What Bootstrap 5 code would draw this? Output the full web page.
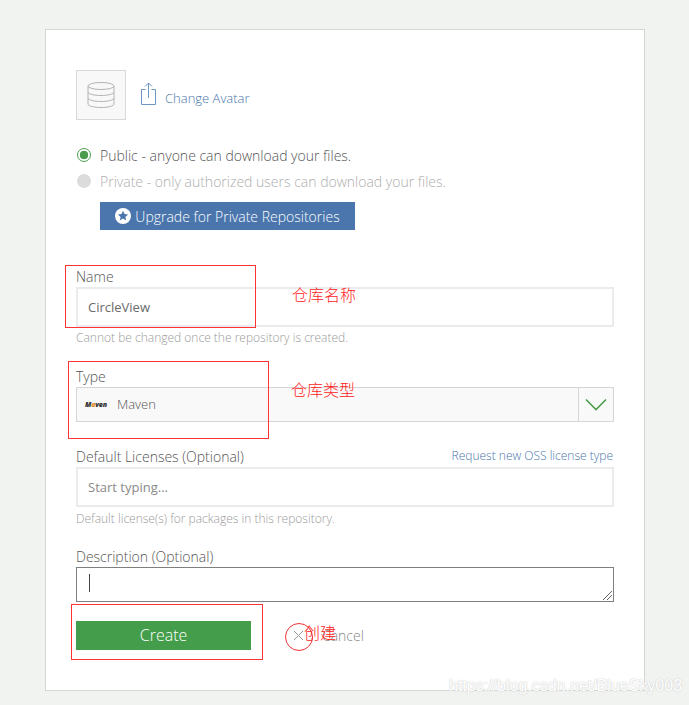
<!DOCTYPE html>
<html lang="zh">
<head>
<meta charset="utf-8">
<title>New repository</title>
<link rel="stylesheet" href="https://cdn.jsdelivr.net/npm/bootstrap@5.3.0/dist/css/bootstrap.min.css">
<style>
html,body{height:705px;overflow:hidden}
body{background:#f1f3f1;font-family:"Open Sans","Noto Sans CJK SC",sans-serif;font-weight:300;color:#555;padding:29px 44px 0 45px}
.panel-box{position:relative;background:#fff;border:1px solid #d4d6d4;height:662px;padding:40px 30px 0 30px}
.avatar-box{width:50px;height:50px;background:#f8f8f8;border:1px solid #d8d8d8}
.avatar-row{height:50px}
.link-blue{color:#4a76ad;text-decoration:none}
.avatar-link{font-size:13px;margin-left:9px;margin-top:8px}
.upload-ico{margin-left:15px;margin-top:-4px}
.radio-row{height:26px;font-size:14px;margin:0}
.radio-list{margin-top:22px}
.radio-dot{width:14px;height:14px;border-radius:50%;margin-left:1px;margin-right:9px;flex:none}
.radio-on{border:1px solid #4a9d4c;background:radial-gradient(circle,#4a9d4c 0 4px,#fff 4.6px)}
.radio-off{background:#dcdcdc}
.muted-line{color:#aeaeae}
.upgrade-btn{background:#4a76ad;color:#fff;width:255px;height:28px;margin:8px 0 0 24px;font-size:14px;font-weight:300;border:0;border-radius:0;padding:0}
.upgrade-btn:hover{background:#4a76ad;color:#fff}
.field-label{font-size:14px;line-height:20px;margin:0;color:#555;display:block}
.field-name{margin-top:37px}
.text-box{height:40px;border:2px solid #e9ebed;border-radius:0;font-size:13px;font-weight:400;color:#6a6a6a;padding:0 10px;box-shadow:none}
.text-box::placeholder{color:#8a8a8a;opacity:1}
.hint-line{font-size:12px;line-height:16px;color:#9a9a9a;margin:3px 0 0}
.select-box{height:35px;border:1px solid #d6d6d6;background:#f9f9f9;font-size:13px}
.select-arrow{width:35px;border-left:1px solid #d6d6d6;height:100%}
.maven-mark{margin-left:8px;width:25px;font-size:7px;line-height:8px;font-weight:800;font-style:italic;color:#333;letter-spacing:-.2px;white-space:nowrap}
.maven-a{color:#e08a2c}
.maven-name{margin-left:7px;font-weight:300;padding-top:1px}
.req-link{font-size:12px;font-weight:300;color:#4a76ad;margin-bottom:2px;margin-right:1px}
.note-box{height:35px;border:1px solid #7f7f7f;border-radius:0;padding:0;box-shadow:none;position:relative}
.caret-line{width:1px;height:18px;background:#444;margin:6px 0 0 12px}
.resize-ico{position:absolute;right:1px;bottom:1px}
.create-btn{background:#449d4a;color:#fff;width:175px;height:29px;border:0;border-radius:0;font-size:16px;font-weight:300;padding:0 0 2px}
.create-btn:hover{background:#449d4a;color:#fff}
.cancel-link{font-size:14px;color:#888;text-decoration:none;margin-left:19px}
.cancel-x{margin-left:43px}
.mark-frame{position:absolute;border:1px solid #f33;pointer-events:none}
.mark-note{position:absolute;color:#f22;font-size:16px;line-height:20px;font-weight:300;font-family:"Noto Sans CJK SC",sans-serif;white-space:nowrap}
.mark-ring{position:absolute;width:28px;height:28px;border:1px solid #e33;border-radius:50%}
.water-mark{position:absolute;left:449px;top:676px;font-family:"Liberation Sans",sans-serif;font-size:16px;line-height:20px;color:#fff;font-weight:400;text-shadow:0 0 1px #ccc,0 0 2px #d6d6d6;white-space:nowrap}
</style>
</head>
<body>
<div class="panel-box">
  <div class="d-flex align-items-center avatar-row">
    <div class="avatar-box d-flex align-items-center justify-content-center">
      <svg width="30" height="28" viewBox="0 0 30 28" fill="none" stroke="#b4b4b4" stroke-width="1"><ellipse cx="15" cy="5" rx="13" ry="3.5"/><path d="M2 5v18c0 2 6 3.500 13 3.500s13-1.500 13-3.500V5"/><path d="M2 11c0 2 6 3.500 13 3.500S28 13 28 11M2 17c0 2 6 3.500 13 3.500S28 19 28 17"/></svg>
    </div>
    <svg class="upload-ico" width="15" height="23" viewBox="0 0 15 23" fill="none" stroke="#6f95c2" stroke-width="1"><path d="M4.500 7.500H.5v15h14v-15h-4M7.500 16V1M4 4.500 7.500 1 11 4.500"/></svg>
    <a href="#" class="link-blue avatar-link">Change Avatar</a>
  </div>

  <div class="radio-list">
    <div class="radio-row d-flex align-items-center"><span class="radio-dot radio-on"></span>Public - anyone can download your files.</div>
    <div class="radio-row d-flex align-items-center muted-line"><span class="radio-dot radio-off"></span>Private - only authorized users can download your files.</div>
    <button type="button" class="btn upgrade-btn d-flex align-items-center justify-content-center gap-1">
      <svg width="16" height="16" viewBox="0 0 16 16"><circle cx="8" cy="8" r="8" fill="#fff"/><path fill="#4a76ad" d="m8 2.800 1.500 3.300 3.600.4-2.700 2.400.8 3.500L8 10.600l-3.200 1.800.8-3.500L2.900 6.500l3.600-.4z"/></svg>
      Upgrade for Private Repositories
    </button>
  </div>

  <label class="field-label field-name">Name</label>
  <input class="form-control text-box" value="CircleView">
  <p class="hint-line">Cannot be changed once the repository is created.</p>

  <label class="field-label" style="margin-top:21px">Type</label>
  <div class="select-box d-flex align-items-center justify-content-between">
    <div class="d-flex align-items-center">
      <span class="maven-mark">M<span class="maven-a">a</span>ven</span>
      <span class="maven-name">Maven</span>
    </div>
    <div class="select-arrow d-flex align-items-center justify-content-center">
      <svg width="22" height="13" viewBox="0 0 22 13" fill="none" stroke="#4a9d4c" stroke-width="1.600"><path d="M1 1.500 11 11.500 21 1.500"/></svg>
    </div>
  </div>

  <div class="d-flex justify-content-between align-items-end" style="margin-top:25px">
    <label class="field-label">Default Licenses (Optional)</label>
    <a href="#" class="req-link" style="text-decoration:none">Request new OSS license type</a>
  </div>
  <input class="form-control text-box" placeholder="Start typing...">
  <p class="hint-line" style="margin-top:4px">Default license(s) for packages in this repository.</p>

  <label class="field-label" style="margin-top:20px">Description (Optional)</label>
  <div class="note-box">
    <div class="caret-line"></div>
    <svg class="resize-ico" width="9" height="9" viewBox="0 0 9 9" stroke="#666" stroke-width="1"><path d="M0 9 9 0M4 9l5-5"/></svg>
  </div>

  <div class="d-flex align-items-center" style="margin-top:19px">
    <button type="button" class="btn create-btn">Create</button>
    <svg class="cancel-x" width="9" height="9" viewBox="0 0 9 9" stroke="#999" stroke-width="1"><path d="m0 0 9 9M9 0 0 9"/></svg>
    <a href="#" class="cancel-link">Cancel</a>
  </div>

  <div class="mark-frame" style="left:19px;top:235px;width:191px;height:63px"></div>
  <div class="mark-frame" style="left:22px;top:331px;width:201px;height:78px"></div>
  <div class="mark-frame" style="left:25px;top:574px;width:192px;height:56px"></div>
  <div class="mark-ring" style="left:239px;top:593px"></div>
  <div class="mark-note" style="left:246px;top:254px">仓库名称</div>
  <div class="mark-note" style="left:245px;top:349px">仓库类型</div>
  <div class="mark-note" style="left:258px;top:592px">创建</div>
</div>
<div class="water-mark">https://blog.csdn.net/BlueSky003</div>
</body>
</html>
